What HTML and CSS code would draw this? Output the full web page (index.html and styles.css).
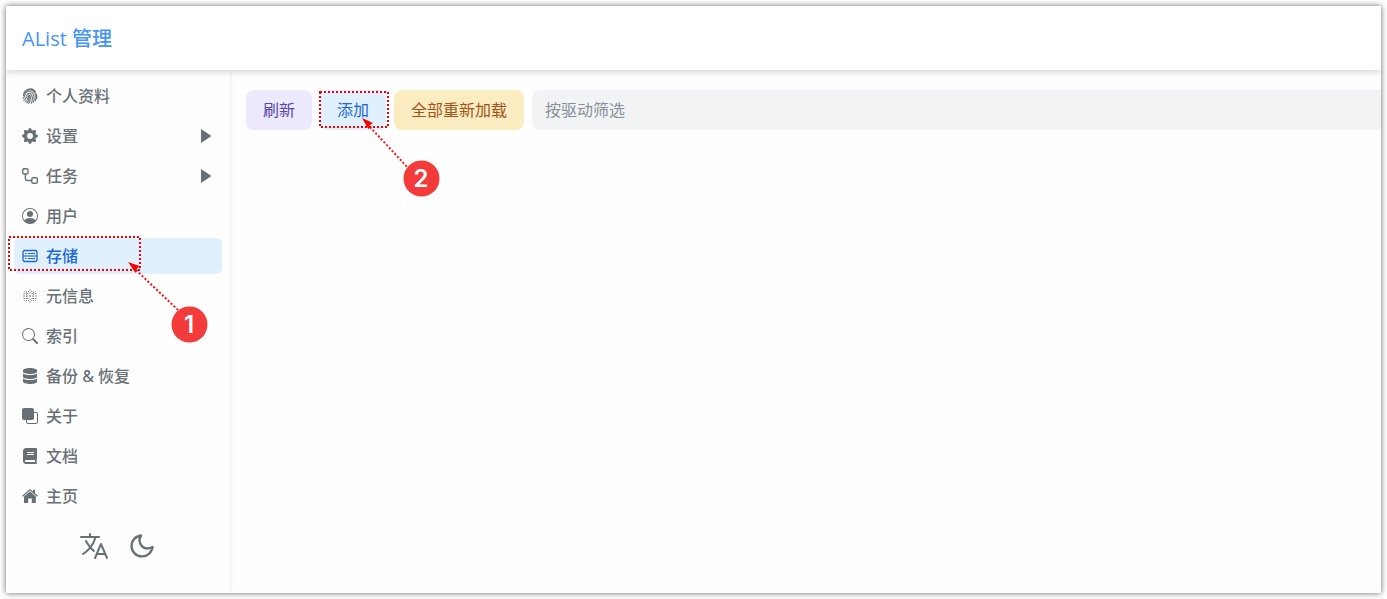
FILE: index.html
```
<!DOCTYPE html>
<html lang="zh-CN">
<head>
    <meta charset="UTF-8">
    <meta name="viewport" content="width=device-width, initial-scale=1.0">
    <title>AList 管理</title>
    <link rel="stylesheet" href="styles.css">
</head>
<body>
    <div class="window">
        <header class="header">
            <h1>AList 管理</h1>
        </header>
        <div class="content">
            <aside class="sidebar">
                <nav class="menu">
                    <a class="menu-item" href="#profile">
                        <svg class="icon" viewBox="0 0 16 16" fill="none" stroke="currentColor" stroke-width="1.1" stroke-linecap="round">
                            <path d="M3.2 3.4C6-.2 11.500 0 13.500 4.200M1.500 7.500C1.800 1 10-.2 12.800 4.800c1.300 2.500 1.400 5.200.6 8M1 10.200c2.200-1.200 1.200-4 3-5.700 2.300-2.200 6-1.200 7.300 1.500 1.200 2.800 1 5.800.1 8.300M1.800 12.200c3.400-1.500 2.400-4.300 3.700-6 1.300-1.400 3.300-.9 4.200.8 1 2.500.8 5.500-.3 8.300M3.200 13.800C6.400 12 5.900 9.600 6.500 7.900c.4-.8 1.400-.6 1.700.2.600 2.500-.1 5-1.500 7.300M4.900 14.900c1.500-1.500 2.300-3.500 2.400-6M14.400 6.200c.5 1.600.4 3.200.2 4.600"/>
                        </svg>
                        <span>个人资料</span>
                    </a>
                    <a class="menu-item" href="#settings">
                        <svg class="icon" viewBox="0 0 16 16" fill="currentColor">
                            <path d="M9.405 1.05c-.413-1.4-2.397-1.4-2.81 0l-.1.34a1.464 1.464 0 0 1-2.105.872l-.31-.17c-1.283-.698-2.686.705-1.987 1.987l.169.311c.446.82.023 1.841-.872 2.105l-.34.1c-1.4.413-1.4 2.397 0 2.81l.34.1a1.464 1.464 0 0 1 .872 2.105l-.17.31c-.698 1.283.705 2.686 1.987 1.987l.311-.169a1.464 1.464 0 0 1 2.105.872l.1.34c.413 1.4 2.397 1.4 2.81 0l.1-.34a1.464 1.464 0 0 1 2.105-.872l.31.17c1.283.698 2.686-.705 1.987-1.987l-.169-.311a1.464 1.464 0 0 1 .872-2.105l.34-.1c1.4-.413 1.4-2.397 0-2.81l-.34-.1a1.464 1.464 0 0 1-.872-2.105l.17-.31c.698-1.283-.705-2.686-1.987-1.987l-.311.169a1.464 1.464 0 0 1-2.105-.872l-.1-.34zM8 10.930a2.929 2.929 0 1 1 0-5.860 2.929 2.929 0 0 1 0 5.858z"/>
                        </svg>
                        <span>设置</span>
                        <svg class="arrow" viewBox="0 0 12 14" fill="currentColor"><path d="M1 0v14l10.500-7z"/></svg>
                    </a>
                    <a class="menu-item" href="#tasks">
                        <svg class="icon" viewBox="0 0 16 16" fill="none" stroke="currentColor" stroke-width="1.4">
                            <rect x="0.700" y="0.700" width="5.300" height="5.300" rx="1.300"/>
                            <rect x="9.800" y="9.800" width="5.500" height="5.500" rx="1.300"/>
                            <path d="M3.400 6v4.500a2 2 0 0 0 2 2h4.400"/>
                        </svg>
                        <span>任务</span>
                        <svg class="arrow" viewBox="0 0 12 14" fill="currentColor"><path d="M1 0v14l10.500-7z"/></svg>
                    </a>
                    <a class="menu-item" href="#users">
                        <svg class="icon" viewBox="0 0 16 16" fill="currentColor">
                            <path d="M11 6a3 3 0 1 1-6 0 3 3 0 0 1 6 0z"/>
                            <path fill-rule="evenodd" d="M0 8a8 8 0 1 1 16 0A8 8 0 0 1 0 8zm8-7a7 7 0 0 0-5.468 11.370C3.242 11.226 4.805 10 8 10s4.757 1.225 5.468 2.370A7 7 0 0 0 8 1z"/>
                        </svg>
                        <span>用户</span>
                    </a>
                    <div class="step-target">
                        <a class="menu-item active" href="#storages">
                            <svg class="icon" viewBox="0 0 16 16" fill="none" stroke="currentColor">
                                <rect x="1" y="2.500" width="14" height="11" rx="1.800" stroke-width="1.300"/>
                                <path d="M1 8h14" stroke-width="1.200"/>
                                <path d="M3 5.500h1.500M6 5.500h7M3 10.500h1.500M6 10.500h7" stroke-width="1"/>
                            </svg>
                            <span>存储</span>
                        </a>
                        <svg class="mark mark-storage" width="200" height="110" viewBox="0 0 200 110">
                            <rect class="mark-box" x="1" y="1" width="131" height="33"/>
                            <path class="mark-line" d="M128 34L170 74"/>
                            <path class="mark-head" d="M120 26l11.500 4-2.500 2.500-1.500 4.500z"/>
                            <circle class="mark-dot" cx="181.500" cy="88.500" r="18"/>
                            <text class="mark-number" x="181" y="97">1</text>
                        </svg>
                    </div>
                    <a class="menu-item" href="#metas">
                        <svg class="icon" viewBox="0 0 16 16" fill="none" stroke="currentColor" stroke-width="1">
                            <path d="M8 1v14" stroke-dasharray="2 1" opacity="0.500"/>
                            <path d="M2 3.500h5M9 3.500h5M2 12.500h5M9 12.500h5" stroke-dasharray="1 1" opacity="0.700"/>
                            <path d="M1.500 5.500h5M9.500 5.500h5M1.500 10.500h5M9.500 10.500h5" stroke-dasharray="2 1" opacity="0.800"/>
                            <path d="M1 8h14" stroke-dasharray="2 1" opacity="0.800"/>
                            <path d="M4.500 4v9M11.500 4v9" stroke-dasharray="1 1" opacity="0.700"/>
                        </svg>
                        <span>元信息</span>
                    </a>
                    <a class="menu-item" href="#indexes">
                        <svg class="icon" viewBox="0 0 16 16" fill="currentColor">
                            <path d="M11.742 10.344a6.500 6.500 0 1 0-1.397 1.398h-.001c.03.04.062.078.098.115l3.850 3.850a1 1 0 0 0 1.415-1.414l-3.850-3.850a1.007 1.007 0 0 0-.115-.1zM12 6.500a5.500 5.500 0 1 1-11 0 5.500 5.500 0 0 1 11 0z"/>
                        </svg>
                        <span>索引</span>
                    </a>
                    <a class="menu-item" href="#backup">
                        <svg class="icon" viewBox="0 0 448 512" fill="currentColor">
                            <path d="M448 73.143v45.714C448 159.143 347.667 192 224 192S0 159.143 0 118.857V73.143C0 32.857 100.333 0 224 0s224 32.857 224 73.143zM448 176v102.857C448 319.143 347.667 352 224 352S0 319.143 0 278.857V176c48.125 33.143 136.208 48.572 224 48.572S399.874 209.143 448 176zm0 160v102.857C448 479.143 347.667 512 224 512S0 479.143 0 438.857V336c48.125 33.143 136.208 48.572 224 48.572S399.874 369.143 448 336z"/>
                        </svg>
                        <span>备份 &amp; 恢复</span>
                    </a>
                    <a class="menu-item" href="#about">
                        <svg class="icon" viewBox="0 0 16 16" fill="currentColor">
                            <path d="M0 2a2 2 0 0 1 2-2h8a2 2 0 0 1 2 2v2h2a2 2 0 0 1 2 2v8a2 2 0 0 1-2 2H6a2 2 0 0 1-2-2v-2H2a2 2 0 0 1-2-2V2zm5 10v2a1 1 0 0 0 1 1h8a1 1 0 0 0 1-1V6a1 1 0 0 0-1-1h-2v5a2 2 0 0 1-2 2H5z"/>
                        </svg>
                        <span>关于</span>
                    </a>
                    <a class="menu-item" href="#docs">
                        <svg class="icon" viewBox="0 0 448 512" fill="currentColor">
                            <path d="M448 360V24c0-13.300-10.700-24-24-24H96C43 0 0 43 0 96v320c0 53 43 96 96 96h328c13.300 0 24-10.700 24-24v-16c0-7.500-3.500-14.300-8.900-18.700-4.200-15.400-4.200-59.300 0-74.700 5.400-4.300 8.900-11.100 8.900-18.600zM128 134c0-3.300 2.700-6 6-6h212c3.300 0 6 2.700 6 6v20c0 3.300-2.700 6-6 6H134c-3.300 0-6-2.700-6-6v-20zm0 64c0-3.300 2.700-6 6-6h212c3.300 0 6 2.700 6 6v20c0 3.300-2.700 6-6 6H134c-3.300 0-6-2.700-6-6v-20zm253.400 250H96c-17.700 0-32-14.300-32-32 0-17.600 14.400-32 32-32h285.400c-1.900 17.100-1.900 46.900 0 64z"/>
                        </svg>
                        <span>文档</span>
                    </a>
                    <a class="menu-item" href="#home">
                        <svg class="icon" viewBox="0 0 16 16" fill="currentColor">
                            <path d="M8 3.600l5.800 5V15H9.800v-4.500H6.200V15H2V8.600z"/>
                            <path d="M8 .9l3 2.600V1.800h2v3.500l2.800 2.500-.8.900L8 2.600 1 8.700l-.8-.9z"/>
                        </svg>
                        <span>主页</span>
                    </a>
                </nav>
                <div class="tools">
                    <button class="tool" type="button" aria-label="语言">
                        <svg width="32" height="32" viewBox="0 0 512 512" fill="none" stroke="currentColor" stroke-width="32" stroke-linecap="round" stroke-linejoin="round">
                            <path d="M48 112h288M192 64v48M272 448l96-224 96 224M301.500 384h133M281.300 112S257 206 199 277 80 384 80 384"/>
                            <path d="M256 336s-35-27-72-75-56-85-56-85"/>
                        </svg>
                    </button>
                    <button class="tool" type="button" aria-label="深色模式">
                        <svg width="28" height="28" viewBox="0 0 24 24" fill="none" stroke="currentColor" stroke-width="2" stroke-linecap="round" stroke-linejoin="round">
                            <path d="M21 12.790A9 9 0 1 1 11.210 3 7 7 0 0 0 21 12.790z"/>
                        </svg>
                    </button>
                </div>
            </aside>
            <main class="main">
                <div class="toolbar">
                    <button class="btn btn-accent" type="button">刷新</button>
                    <div class="step-target">
                        <button class="btn btn-info" type="button">添加</button>
                        <svg class="mark mark-add" width="124" height="110" viewBox="0 0 124 110">
                            <rect class="mark-box" x="1" y="1" width="68" height="35"/>
                            <path class="mark-line" d="M51 36L90 78"/>
                            <path class="mark-head" d="M43 27l11 5-3 2-1.500 4.500z"/>
                            <circle class="mark-dot" cx="102.500" cy="87.500" r="18"/>
                            <text class="mark-number" x="102" y="96">2</text>
                        </svg>
                    </div>
                    <button class="btn btn-warning" type="button">全部重新加载</button>
                    <input class="filter" type="text" placeholder="按驱动筛选" aria-label="按驱动筛选">
                </div>
            </main>
        </div>
    </div>
</body>
</html>
```
FILE: styles.css
```
* {
    box-sizing: border-box;
}
body {
    margin: 0;
    padding: 6px;
    min-height: 100vh;
    display: flex;
    background: #fff;
    color: #687076;
    font-family: "Noto Sans", "Noto Sans CJK SC", sans-serif;
    font-size: 16px;
    line-height: 24px;
}
button,
input {
    font: inherit;
    border: none;
    margin: 0;
}
.window {
    flex: 1;
    display: flex;
    flex-direction: column;
    overflow: hidden;
    background: #fefefe;
    box-shadow: 0 0 6px rgba(0, 0, 0, 0.6);
}
.header {
    display: flex;
    align-items: center;
    height: 64px;
    padding: 2px 16px 0;
    background: #fff;
    box-shadow: 0 1px 8px rgba(0, 0, 0, 0.2);
    z-index: 1;
}
.header h1 {
    margin: 0;
    color: #4594f8;
    font-family: "Open Sans", "Noto Sans CJK SC", sans-serif;
    font-size: 20px;
    font-weight: 500;
    line-height: 28px;
}
.content {
    flex: 1;
    display: flex;
}
.sidebar {
    width: 224px;
    padding: 8px;
    box-shadow: 0 0 4px rgba(0, 0, 0, 0.1);
}
.menu {
    display: flex;
    flex-direction: column;
    gap: 4px;
}
.menu-item {
    display: flex;
    align-items: center;
    gap: 8px;
    height: 36px;
    padding: 0 8px;
    border-radius: 6px;
    color: inherit;
    font-weight: 500;
    text-decoration: none;
}
.menu-item.active {
    background: #e1f0ff;
    color: #1c68d6;
}
.icon {
    width: 16px;
    height: 16px;
}
.arrow {
    width: 12px;
    height: 14px;
    margin-left: auto;
    margin-right: 2px;
}
.tools {
    display: flex;
    justify-content: center;
    gap: 16px;
    margin-top: 16px;
}
.tool {
    display: flex;
    align-items: center;
    justify-content: center;
    width: 32px;
    height: 32px;
    padding: 0;
    background: none;
    color: inherit;
    cursor: pointer;
}
.main {
    flex: 1;
    padding: 20px 0 20px 16px;
}
.toolbar {
    display: flex;
    gap: 8px;
}
.btn {
    height: 40px;
    padding: 0 17px;
    border-radius: 8px;
    white-space: nowrap;
    cursor: pointer;
}
.btn-accent {
    background: #ede9fe;
    color: #5746af;
}
.btn-info {
    background: #e1f0ff;
    color: #1c68d6;
}
.btn-warning {
    background: #fbecc1;
    color: #a35318;
}
.filter {
    flex: 1;
    min-width: 0;
    height: 40px;
    padding: 0 0 0 13px;
    border-radius: 8px 0 0 8px;
    background: #f1f3f5;
    color: #11181c;
}
.filter::placeholder {
    color: #889096;
    opacity: 1;
}

/* numbered step markers */
.step-target {
    position: relative;
}
.mark {
    position: absolute;
    pointer-events: none;
    z-index: 2;
}
.mark-storage {
    left: -6px;
    top: -2px;
}
.mark-add {
    left: -1px;
    top: 1px;
}
.mark-box {
    fill: none;
    stroke: #f00000;
    stroke-width: 2;
    stroke-dasharray: 2 2;
}
.mark-line {
    stroke: #fa1414;
    stroke-width: 2;
    stroke-dasharray: 2 2;
}
.mark-head {
    fill: #fa0000;
}
.mark-dot {
    fill: #f43b3b;
}
.mark-number {
    fill: #fff;
    font-family: Inter, sans-serif;
    font-size: 24px;
    font-weight: 600;
    text-anchor: middle;
}
```
